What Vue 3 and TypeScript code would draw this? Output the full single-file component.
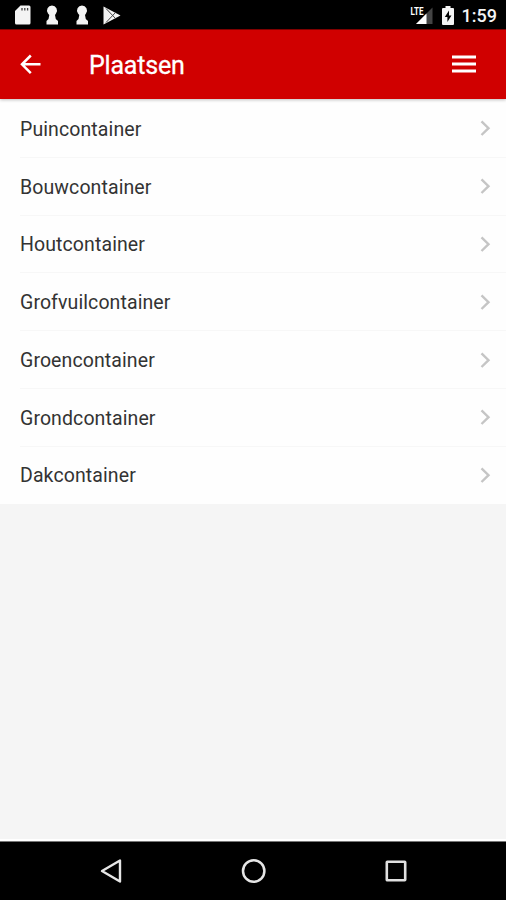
<script setup lang="ts">
interface Place {
  id: number
  name: string
}

const places: Place[] = [
  'Puincontainer',
  'Bouwcontainer',
  'Houtcontainer',
  'Grofvuilcontainer',
  'Groencontainer',
  'Grondcontainer',
  'Dakcontainer',
].map((name, id) => ({ id, name }))
</script>

<template>
  <div class="screen">
    <div class="status">
      <div class="notifications">
        <svg width="16" height="20" viewBox="0 0 16 20">
          <path d="M5.500 0.500H14q1.500 0 1.500 1.500v16q0 1.500-1.500 1.500H1.500Q0 19.500 0 18V6z" fill="#f4f4f4" />
          <path d="M7 3v2.500M9.800 3v2.500M12.600 3v2.500" stroke="#444" stroke-width="1.300" />
        </svg>
        <svg v-for="n in 2" :key="n" width="12" height="20" viewBox="0 0 12 20">
          <path d="M6 0.500a5 5 0 0 0-4 8L3.300 10 2.500 14 0.500 16V19.500h11.500v-3.500L9.800 14 9 10 10 8.500A5 5 0 0 0 6 0.500z" fill="#f4f4f4" />
        </svg>
        <svg width="18" height="19" viewBox="0 0 18 19">
          <path d="M0.500 0.500L17.500 9.500 0.500 18.500z" fill="#f4f4f4" />
          <path d="M3 2.500l9.500 10M3 16.500L12.500 6.500" stroke="#444" stroke-width="1" fill="none" />
        </svg>
      </div>
      <div class="system">
        <svg class="signal" width="24" height="20" viewBox="0 0 24 20">
          <path d="M22.500 2.500V19H6z" fill="#444" />
          <path d="M16.500 8.500V19H6z" fill="#fff" />
          <text class="network" x="0.500" y="9.500" textLength="13" lengthAdjust="spacingAndGlyphs">LTE</text>
        </svg>
        <svg class="battery" width="12" height="19" viewBox="0 0 12 19">
          <path d="M3.500 0h5v2H11q1 0 1 1v15q0 1-1 1H1q-1 0-1-1V3q0-1 1-1h2.500z" fill="#f4f4f4" />
          <path d="M7 4.500L2.800 11h2.600v5L9.500 9.500H7z" fill="#000" />
        </svg>
        <span class="clock">1:59</span>
      </div>
    </div>

    <header class="toolbar">
      <svg class="back" width="22" height="20" viewBox="0 0 22 20">
        <path d="M20.500 10.300H2M10.800 1.500L2 10.300l8.800 8.800" fill="none" stroke="#fff" stroke-width="2.500" />
      </svg>
      <h1 class="title">Plaatsen</h1>
      <svg class="menu" width="24" height="18" viewBox="0 0 24 18">
        <path d="M0 2h24M0 9h24M0 16h24" stroke="#fff" stroke-width="3.200" />
      </svg>
    </header>

    <main class="content">
      <ul class="list">
        <li v-for="place in places" :key="place.id" class="row">
          <span class="name">{{ place.name }}</span>
          <svg width="11" height="16" viewBox="0 0 11 16">
            <path d="M1.500 1.400L8.500 8.200l-7 6.800" fill="none" stroke="#c5c5c5" stroke-width="2.400" />
          </svg>
        </li>
      </ul>
    </main>

    <nav class="navbar">
      <svg width="24" height="26" viewBox="0 0 24 26">
        <path d="M3 13L21 2.500v21z" fill="none" stroke="#e6e6e6" stroke-width="2.400" stroke-linejoin="round" />
      </svg>
      <svg width="26" height="26" viewBox="0 0 26 26">
        <circle cx="12.700" cy="13" r="10.700" fill="none" stroke="#e6e6e6" stroke-width="2.500" />
      </svg>
      <svg width="24" height="26" viewBox="0 0 24 26">
        <rect x="2.800" y="3.800" width="18.400" height="18.400" rx="0.500" fill="none" stroke="#e0e0e0" stroke-width="2.600" />
      </svg>
    </nav>
  </div>
</template>

<style>
body {
  margin: 0;
}
</style>

<style scoped>
.screen {
  width: 506px;
  height: 900px;
  display: flex;
  flex-direction: column;
  overflow: hidden;
  background: #f5f5f5;
  font-family: Roboto, "Liberation Sans", sans-serif;
}
.screen svg {
  display: block;
  flex: none;
}
.status {
  box-sizing: border-box;
  height: 30px;
  flex: none;
  display: flex;
  justify-content: space-between;
  padding: 0 9px 0 15px;
  background: #000;
  border-bottom: 1px solid #850000;
}
.notifications,
.system {
  display: flex;
  align-items: center;
  padding-top: 1px;
}
.notifications {
  gap: 18px;
}
.notifications svg:nth-child(1) {
  margin-right: -3px;
}
.notifications svg:nth-child(4) {
  margin-left: -3px;
}
.network {
  fill: #fff;
  font-size: 10.500px;
  font-weight: 700;
}
.battery {
  margin-left: 8px;
}
.clock {
  margin-left: 8px;
  padding-top: 2px;
  color: #f4f4f4;
  font-size: 18px;
  font-weight: 500;
  line-height: 20px;
}
.toolbar {
  box-sizing: border-box;
  height: 69px;
  flex: none;
  display: flex;
  align-items: center;
  padding: 0 30px 2px 20px;
  background: #d00000;
  box-shadow: 0 1px 3px rgba(0, 0, 0, 0.25);
  position: relative;
}
.title {
  flex: 1;
  margin: 0 0 0 47px;
  padding-top: 4px;
  color: #fff;
  font-size: 25px;
  font-weight: 400;
  letter-spacing: -0.200px;
  line-height: 30px;
  -webkit-text-stroke: 0.300px #fff;
}
.content {
  flex: 1;
  border-bottom: 2px solid #fff;
}
.list {
  margin: 0;
  padding: 1px 0 0;
  list-style: none;
  background: #fefefe;
}
.row {
  box-sizing: border-box;
  height: 57.800px;
  display: flex;
  align-items: center;
  justify-content: space-between;
  margin-left: 20px;
  padding: 0 15px 0 0;
  border-bottom: 1px solid #f7f7f7;
  color: #333;
  font-size: 19.500px;
  letter-spacing: 0.100px;
}
.name {
  padding-top: 2px;
}
.row:last-child {
  height: 57px;
  border-bottom-color: transparent;
}
.navbar {
  box-sizing: border-box;
  height: 59px;
  flex: none;
  display: flex;
  align-items: center;
  justify-content: space-between;
  padding: 0 98px 0 99px;
  background: #000;
  border-top: 1px solid #777;
}
</style>
